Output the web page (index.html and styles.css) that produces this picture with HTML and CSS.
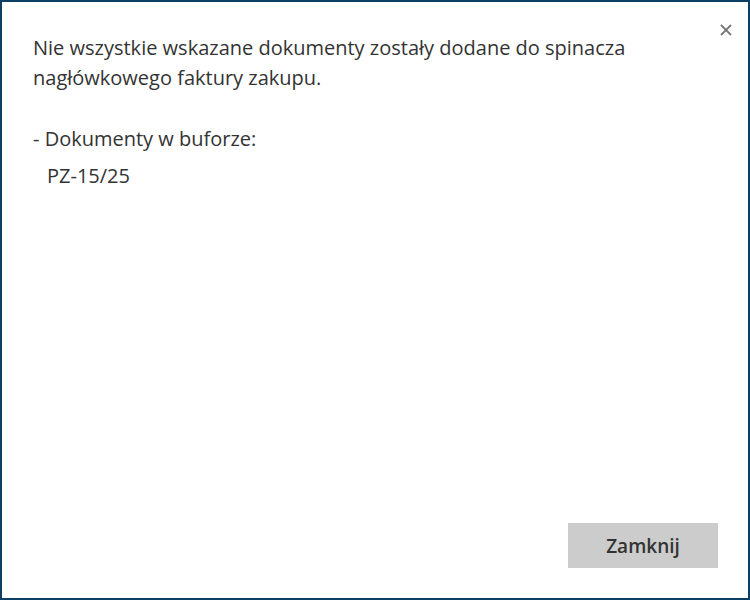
FILE: index.html
```html
<!DOCTYPE html>
<html lang="pl">
    <head>
        <title>Komunikat</title>
        <meta charset="UTF-8">
        <link rel="stylesheet" href="styles.css">
    </head>
    <body>
        <div class="dialog">
            <button class="close" aria-label="Zamknij">
                <svg width="12" height="12" viewBox="0 0 12 12">
                    <path d="M1 1 L11 11 M11 1 L1 11" stroke="#777" stroke-width="1.8" fill="none"/>
                </svg>
            </button>
            <div class="content">
                <p class="message">Nie wszystkie wskazane dokumenty zostały dodane do spinacza nagłówkowego faktury zakupu.</p>
                <p class="label">- Dokumenty w buforze:</p>
                <ul class="docs">
                    <li>PZ-15/25</li>
                </ul>
            </div>
            <div class="footer">
                <button class="btn">Zamknij</button>
            </div>
        </div>
    </body>
</html>
```

FILE: styles.css
```css
html, body {
    margin: 0;
    padding: 0;
    background-color: #ffffff;
}
.dialog {
    position: relative;
    box-sizing: border-box;
    width: 750px;
    height: 600px;
    border: 2px solid #0b3f66;
    background-color: #ffffff;
    display: flex;
    flex-direction: column;
    font-family: "Open Sans", sans-serif;
    color: #333333;
}
.close {
    position: absolute;
    top: 20px;
    right: 14px;
    width: 16px;
    height: 16px;
    padding: 2px;
    border: 0;
    background: none;
    cursor: pointer;
}
.content {
    flex: 1;
    padding: 31px 60px 0 31px;
}
.message {
    font-size: 20px;
    line-height: 30px;
    margin: 0;
    width: 600px;
}
.label {
    font-size: 20px;
    line-height: 30px;
    margin: 31px 0 0 0;
}
.docs {
    list-style: none;
    margin: 7px 0 0 0;
    padding: 0 0 0 14px;
    font-size: 20px;
    line-height: 30px;
}
.footer {
    display: flex;
    justify-content: flex-end;
    padding: 0 30px 30px 0;
}
.btn {
    width: 150px;
    height: 45px;
    border: 0;
    background-color: #cccccc;
    color: #333333;
    font-family: "Open Sans", sans-serif;
    font-size: 19px;
    font-weight: 600;
    cursor: pointer;
}
```
